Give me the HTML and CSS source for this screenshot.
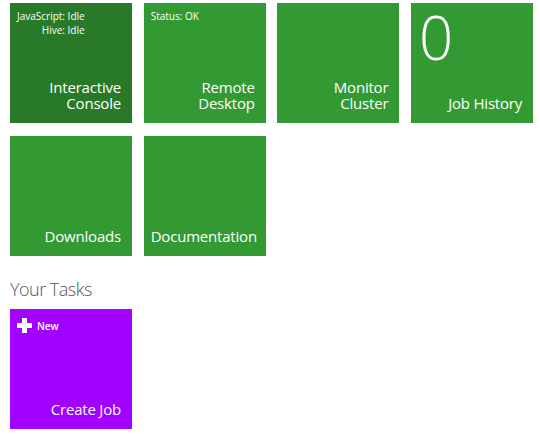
FILE: index.html
```html
<!DOCTYPE html>
<html>
<head>
<meta charset="utf-8">
<link rel="stylesheet" href="styles.css">
</head>
<body>
<div class="page">
  <div class="tiles">
    <div class="tile dark">
      <div class="status status-multi">
        <div>JavaScript: Idle</div>
        <div>Hive: Idle</div>
      </div>
      <div class="label">Interactive<br>Console</div>
    </div>
    <div class="tile">
      <div class="status">Status: OK</div>
      <div class="label">Remote<br>Desktop</div>
    </div>
    <div class="tile">
      <div class="label">Monitor<br>Cluster</div>
    </div>
    <div class="tile">
      <div class="count">0</div>
      <div class="label">Job History</div>
    </div>
    <div class="tile">
      <div class="label">Downloads</div>
    </div>
    <div class="tile">
      <div class="label">Documentation</div>
    </div>
  </div>
  <h2 class="section-title">Your Tasks</h2>
  <div class="tiles">
    <div class="tile purple">
      <div class="new">
        <svg class="plus" width="15" height="15" viewBox="0 0 15 15"><rect x="5" y="0" width="5" height="15" fill="#fff"/><rect x="0" y="5" width="15" height="5" fill="#fff"/></svg>
        <span>New</span>
      </div>
      <div class="label">Create Job</div>
    </div>
  </div>
</div>
</body>
</html>
```
FILE: styles.css
```css
html, body {
  margin: 0;
  padding: 0;
  background: #fff;
}
body {
  font-family: "Open Sans", "Noto Sans", sans-serif;
  color: #fff;
}
.page {
  padding: 3px 0 0 10px;
}
.tiles {
  display: grid;
  grid-template-columns: repeat(4, 122px);
  column-gap: 11.7px;
  row-gap: 13px;
}
.tile {
  position: relative;
  height: 120px;
  background: #339933;
  display: flex;
  flex-direction: column;
  justify-content: space-between;
  box-sizing: border-box;
  padding: 6px 11px 12px 7px;
}
.tile.dark {
  background: #287a28;
}
.tile.purple {
  background: #a200ff;
}
.status {
  font-size: 10px;
  line-height: 14px;
}
.status-multi {
  align-self: flex-start;
  text-align: right;
}
.label {
  margin-top: auto;
  text-align: right;
  font-size: 15px;
  line-height: 15.5px;
  letter-spacing: -0.2px;
}
.count {
  font-size: 60px;
  font-weight: 300;
  line-height: 60px;
  margin-top: -2px;
  margin-left: 1px;
}
.section-title {
  margin: 23px 0 10px 0;
  font-weight: 300;
  font-size: 18px;
  line-height: 20px;
  color: #555;
  letter-spacing: -0.5px;
}
.new {
  display: flex;
  align-items: center;
  gap: 5px;
  margin-top: 3px;
  font-size: 10px;
  font-weight: 600;
}
.plus {
  display: block;
}
```
